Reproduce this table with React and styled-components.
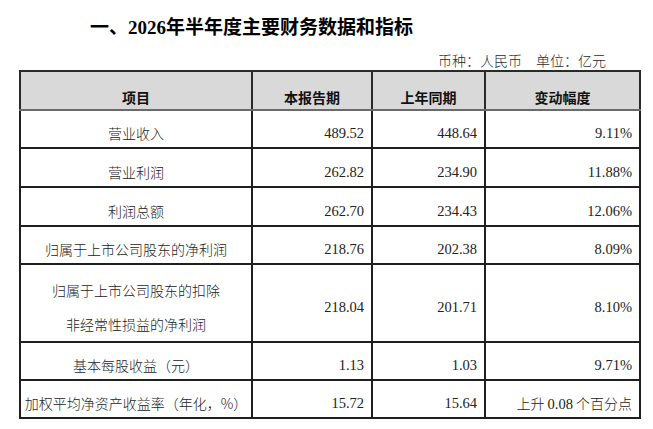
import React from "react";
import styled, { createGlobalStyle } from "styled-components";

const Global = createGlobalStyle`
  html, body { margin: 0; padding: 0; background: #fff; }
  body { font-family: "Liberation Serif", "Noto Sans CJK SC", serif; color: #1c1c1c; }
`;

//style
const Page = styled.div`
  width: 653px;
  height: 429px;
  padding: 14px 0 0 19px;
  box-sizing: border-box;
`;
const Title = styled.h2`
  margin: 0 0 0 71px;
  font-family: "Liberation Serif", "Noto Sans CJK SC", serif;
  font-size: 19px;
  font-weight: 700;
  line-height: 28px;
  color: #000;
`;
const Unit = styled.div`
  width: 587px;
  margin-top: 8px;
  text-align: right;
  font-family: "Noto Sans CJK SC", sans-serif;
  font-size: 14px;
  font-weight: 300;
  line-height: 20px;
  color: #2a2a2a;
  white-space: pre;
`;
const Table = styled.table`
  width: 620px;
  border-collapse: collapse;
  table-layout: fixed;
`;
const Row = styled.tr`
  height: ${(p) => p.$h}px;
`;
const Head = styled.th`
  padding: 12px 0 0;
  background: #d9d9d9;
  border: 2px solid #2a2a2a;
  border-bottom-color: #6a6a6a;
  font-family: "Noto Sans CJK SC", sans-serif;
  font-size: 14px;
  font-weight: 700;
  line-height: 20px;
  color: #111;
  text-align: center;
  vertical-align: middle;
`;
const Cell = styled.td`
  padding: 8px ${(p) => (p.$num ? 7 : 0)}px 0 0;
  border: 2px solid #1f1f1f;
  border-top-color: #3a3a3a;
  font-family: ${(p) =>
    p.$num
      ? `"Liberation Serif", "Noto Sans CJK SC", serif`
      : `"Noto Sans CJK SC", sans-serif`};
  font-size: ${(p) => (p.$num ? 14.5 : 14)}px;
  font-weight: ${(p) => (p.$num ? 400 : 300)};
  line-height: ${(p) => (p.$two ? 34 : 20)}px;
  text-align: ${(p) => (p.$num ? "right" : "center")};
  vertical-align: middle;
  color: #222;
  white-space: nowrap;
`;
const Cjk = styled.span`
  font-family: "Noto Sans CJK SC", sans-serif;
  font-size: 14px;
  font-weight: 300;
`;

const rows = [
  ["营业收入", "489.52", "448.64", "9.11%", 38],
  ["营业利润", "262.82", "234.90", "11.88%", 39],
  ["利润总额", "262.70", "234.43", "12.06%", 39],
  ["归属于上市公司股东的净利润", "218.76", "202.38", "8.09%", 38],
  [["归属于上市公司股东的扣除", "非经常性损益的净利润"], "218.04", "201.71", "8.10%", 67],
  ["基本每股收益（元）", "1.13", "1.03", "9.71%", 38],
  [
    "加权平均净资产收益率（年化，%）",
    "15.72",
    "15.64",
    <>
      <Cjk>上升 </Cjk>0.08<Cjk> 个百分点</Cjk>
    </>,
    38,
  ],
];

//mark up
const App = () => (
  <Page>
    <Global />
    <Title>一、2026年半年度主要财务数据和指标</Title>
    <Unit>{"币种：人民币　单位：亿元"}</Unit>
    <Table>
      <colgroup>
        <col style={{ width: 232 }} />
        <col style={{ width: 120 }} />
        <col style={{ width: 113 }} />
        <col style={{ width: 155 }} />
      </colgroup>
      <thead>
        <Row $h={39}>
          <Head>项目</Head>
          <Head>本报告期</Head>
          <Head>上年同期</Head>
          <Head>变动幅度</Head>
        </Row>
      </thead>
      <tbody>
        {rows.map(([label, cur, prev, change, h], i) => {
          const two = Array.isArray(label);
          return (
            <Row key={i} $h={h}>
              <Cell $two={two}>
                {two ? (
                  <>
                    {label[0]}
                    <br />
                    {label[1]}
                  </>
                ) : (
                  label
                )}
              </Cell>
              <Cell $num>{cur}</Cell>
              <Cell $num>{prev}</Cell>
              <Cell $num>{change}</Cell>
            </Row>
          );
        })}
      </tbody>
    </Table>
  </Page>
);

export default App;
